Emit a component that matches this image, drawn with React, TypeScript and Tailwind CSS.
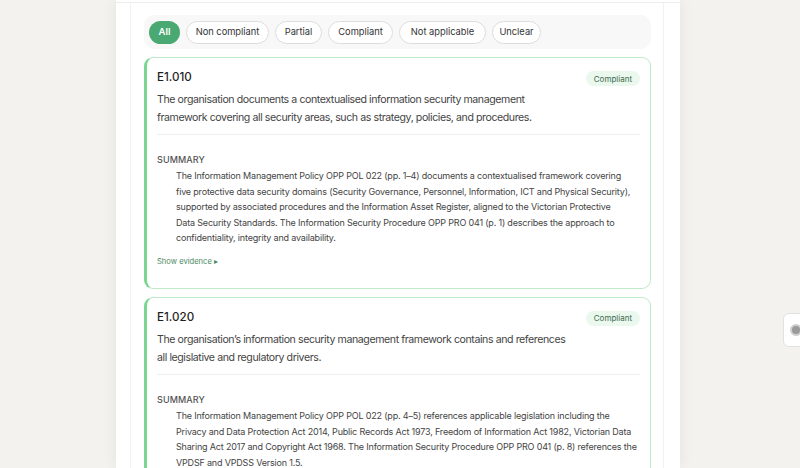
import React from "react";

type Item = {
  code: string;
  status: string;
  desc: string[];
  summary: string[];
};

const filters: { label: string; w: string }[] = [
  { label: "All", w: "w-[31px]" },
  { label: "Non compliant", w: "w-[83px]" },
  { label: "Partial", w: "w-[47px]" },
  { label: "Compliant", w: "w-[65px]" },
  { label: "Not applicable", w: "w-[87px]" },
  { label: "Unclear", w: "w-[49px]" },
];

const items: Item[] = [
  {
    code: "E1.010",
    status: "Compliant",
    desc: [
      "The organisation documents a contextualised information security management",
      "framework covering all security areas, such as strategy, policies, and procedures.",
    ],
    summary: [
      "The Information Management Policy OPP POL 022 (pp. 1–4) documents a contextualised framework covering",
      "five protective data security domains (Security Governance, Personnel, Information, ICT and Physical Security),",
      "supported by associated procedures and the Information Asset Register, aligned to the Victorian Protective",
      "Data Security Standards. The Information Security Procedure OPP PRO 041 (p. 1) describes the approach to",
      "confidentiality, integrity and availability.",
    ],
  },
  {
    code: "E1.020",
    status: "Compliant",
    desc: [
      "The organisation’s information security management framework contains and references",
      "all legislative and regulatory drivers.",
    ],
    summary: [
      "The Information Management Policy OPP POL 022 (pp. 4–5) references applicable legislation including the",
      "Privacy and Data Protection Act 2014, Public Records Act 1973, Freedom of Information Act 1982, Victorian Data",
      "Sharing Act 2017 and Copyright Act 1968. The Information Security Procedure OPP PRO 041 (p. 8) references the",
      "VPDSF and VPDSS Version 1.5.",
    ],
  },
];

function Card({ item }: { item: Item }) {
  return (
    <div className="rounded-[9px] border border-[#bfe9c8] border-l-[3px] border-l-[#7cd692] bg-white pl-[10px] pr-[10px] pt-[10px] pb-[20px] shrink-0">
      <div className="flex items-start justify-between">
        <div className="text-[11.6px] leading-[18px] font-medium text-[#1f1f1f]">{item.code}</div>
        <div className="mt-[3px] rounded-full bg-[#eaf8ee] px-[8px] h-[15px] flex items-center text-[8px] text-[#3f6b4f]">
          {item.status}
        </div>
      </div>
      <div className="mt-[5px] text-[10.6px] leading-[18px] text-[#444444] tracking-[-0.42px]">
        {item.desc.map((l) => (
          <div key={l} className="whitespace-nowrap">{l}</div>
        ))}
      </div>
      <div className="mt-[7px] h-px bg-[#efefef]" />
      <div className="mt-[18px] text-[9px] leading-[13px] tracking-[0.1px] text-[#555555] font-medium">SUMMARY</div>
      <div className="mt-[2px] pl-[19px] text-[9px] leading-[15.6px] text-[#444444] tracking-[-0.18px]">
        {item.summary.map((l) => (
          <div key={l} className="whitespace-nowrap">{l}</div>
        ))}
      </div>
      <div className="mt-[10px] text-[7.6px] leading-[12px] text-[#4a8a60]">Show evidence ▸</div>
    </div>
  );
}

export default function App() {
  return (
    <div
      className="relative w-[800px] h-[468px] overflow-hidden bg-[#f3f2ee]"
      style={{ fontFamily: "Inter, 'Noto Sans', sans-serif" }}
    >
      <div className="ml-[116px] w-[564px] h-full bg-white pt-[2px] shadow-[0_0_14px_rgba(0,0,0,0.07)]">
        <div className="h-full border-t border-[#ececec] pl-[14px] pr-[16px]">
          <div className="h-full border-x border-[#f2f2f2] pl-[13px] pr-[12px] pt-[12px] flex flex-col gap-[8px]">
            <div className="rounded-[10px] bg-[#f8f8f8] h-[34px] px-[5px] flex items-center gap-[6px] shrink-0">
              {filters.map((f, i) =>
                i === 0 ? (
                  <div
                    key={f.label}
                    className={`${f.w} h-[23px] rounded-full bg-[#4aa873] text-white text-[9.5px] font-semibold flex items-center justify-center`}
                  >
                    {f.label}
                  </div>
                ) : (
                  <div
                    key={f.label}
                    className={`${f.w} h-[23px] rounded-full bg-white border border-[#dddddd] text-[#333333] text-[9.3px] flex items-center justify-center`}
                  >
                    {f.label}
                  </div>
                )
              )}
            </div>
            {items.map((it) => (
              <Card key={it.code} item={it} />
            ))}
          </div>
        </div>
      </div>
      <div className="absolute left-[783px] top-[313px] w-[30px] h-[34px] rounded-[6px] bg-white border border-[#e2e2e2] flex items-center pl-[6px]">
        <div className="w-[12px] h-[12px] rounded-full bg-[#9a9a9a] border-2 border-[#cfcfcf]" />
      </div>
    </div>
  );
}
